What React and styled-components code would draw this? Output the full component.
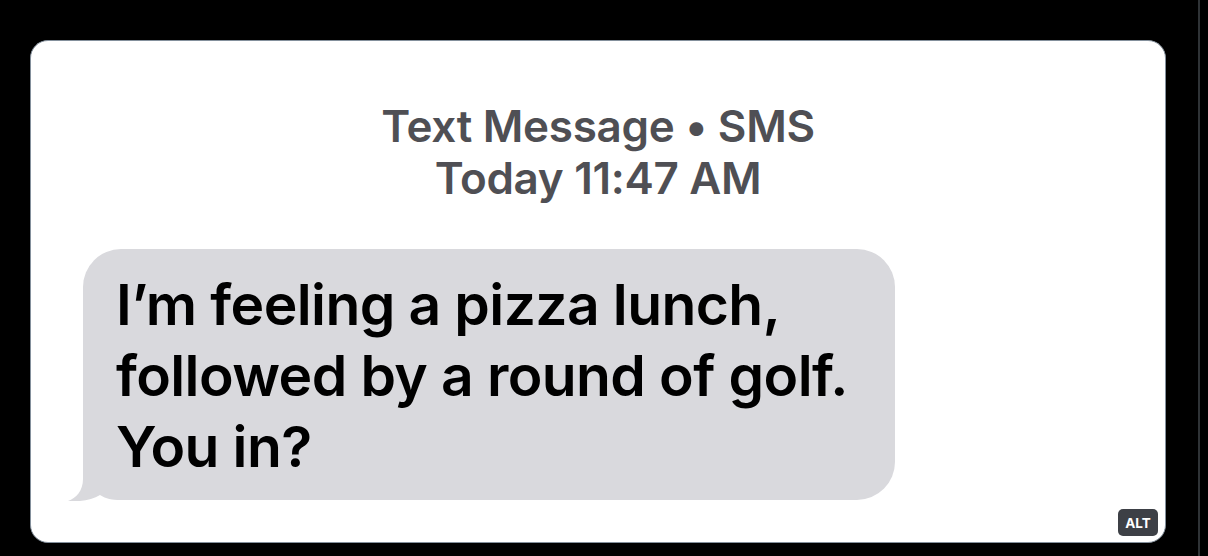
import React from "react";
import styled, { createGlobalStyle } from "styled-components";

const GlobalStyle = createGlobalStyle`
  html, body {
    margin: 0;
    padding: 0;
    background: #000;
  }
  body {
    font-family: Inter, "Noto Sans", "Liberation Sans", sans-serif;
  }
`;

function App() {
  return (
    <>
      <GlobalStyle />
      <Page>
        <CardSlot>
          <Card>
            <Header>
              <p>Text Message • SMS</p>
              <p>Today 11:47 AM</p>
            </Header>
            <Bubble>
              <Tail viewBox="0 0 53 41" width="53" height="41">
                <path d="M15 0 L15 19 C15 31 8 38 0 41 C12 42 24 40 32 35 C38 39 44 40 53 40 L53 0 Z" />
              </Tail>
              <BubbleText>
                I’m feeling a pizza lunch,
                <br />
                followed by a round of golf.
                <br />
                You in?
              </BubbleText>
            </Bubble>
            <AltBadge>ALT</AltBadge>
          </Card>
        </CardSlot>
        <Divider />
      </Page>
    </>
  );
}

const Page = styled.div`
  display: flex;
  height: 556px;
  width: 1208px;
  overflow: hidden;
`;

const CardSlot = styled.div`
  padding: 40px 0 0 30px;
`;

const Card = styled.div`
  position: relative;
  box-sizing: border-box;
  width: 1136px;
  height: 503px;
  background: #fff;
  border: 1.5px solid #84909c;
  border-radius: 18px;
  display: flex;
  flex-direction: column;
`;

const Header = styled.div`
  padding-top: 59px;
  text-align: center;
  color: #4f4f54;

  p {
    margin: 0;
    font-size: 44px;
    line-height: 52px;
    font-weight: 600;
    letter-spacing: -0.3px;
  }
`;

const Bubble = styled.div`
  position: relative;
  align-self: flex-start;
  box-sizing: border-box;
  width: 812px;
  height: 251px;
  margin: 45px 0 0 52px;
  padding: 20px 0 0 33px;
  background: #d9d9dd;
  border-radius: 38px;
`;

const Tail = styled.svg`
  position: absolute;
  left: -15px;
  bottom: -1px;
  fill: #d9d9dd;
`;

const BubbleText = styled.p`
  position: relative;
  margin: 0;
  color: #000;
  font-size: 57px;
  line-height: 71px;
  font-weight: 600;
  letter-spacing: -0.6px;
`;

const AltBadge = styled.span`
  position: absolute;
  right: 7px;
  bottom: 6px;
  width: 40px;
  height: 27px;
  border-radius: 5px;
  background: #3d4046;
  color: #fff;
  font-family: Inter, "Liberation Sans", sans-serif;
  font-size: 13.5px;
  font-weight: 700;
  display: flex;
  align-items: center;
  justify-content: center;
`;

const Divider = styled.div`
  width: 2px;
  height: 100%;
  margin-left: 32px;
  background: #2f3336;
`;

export default App;
